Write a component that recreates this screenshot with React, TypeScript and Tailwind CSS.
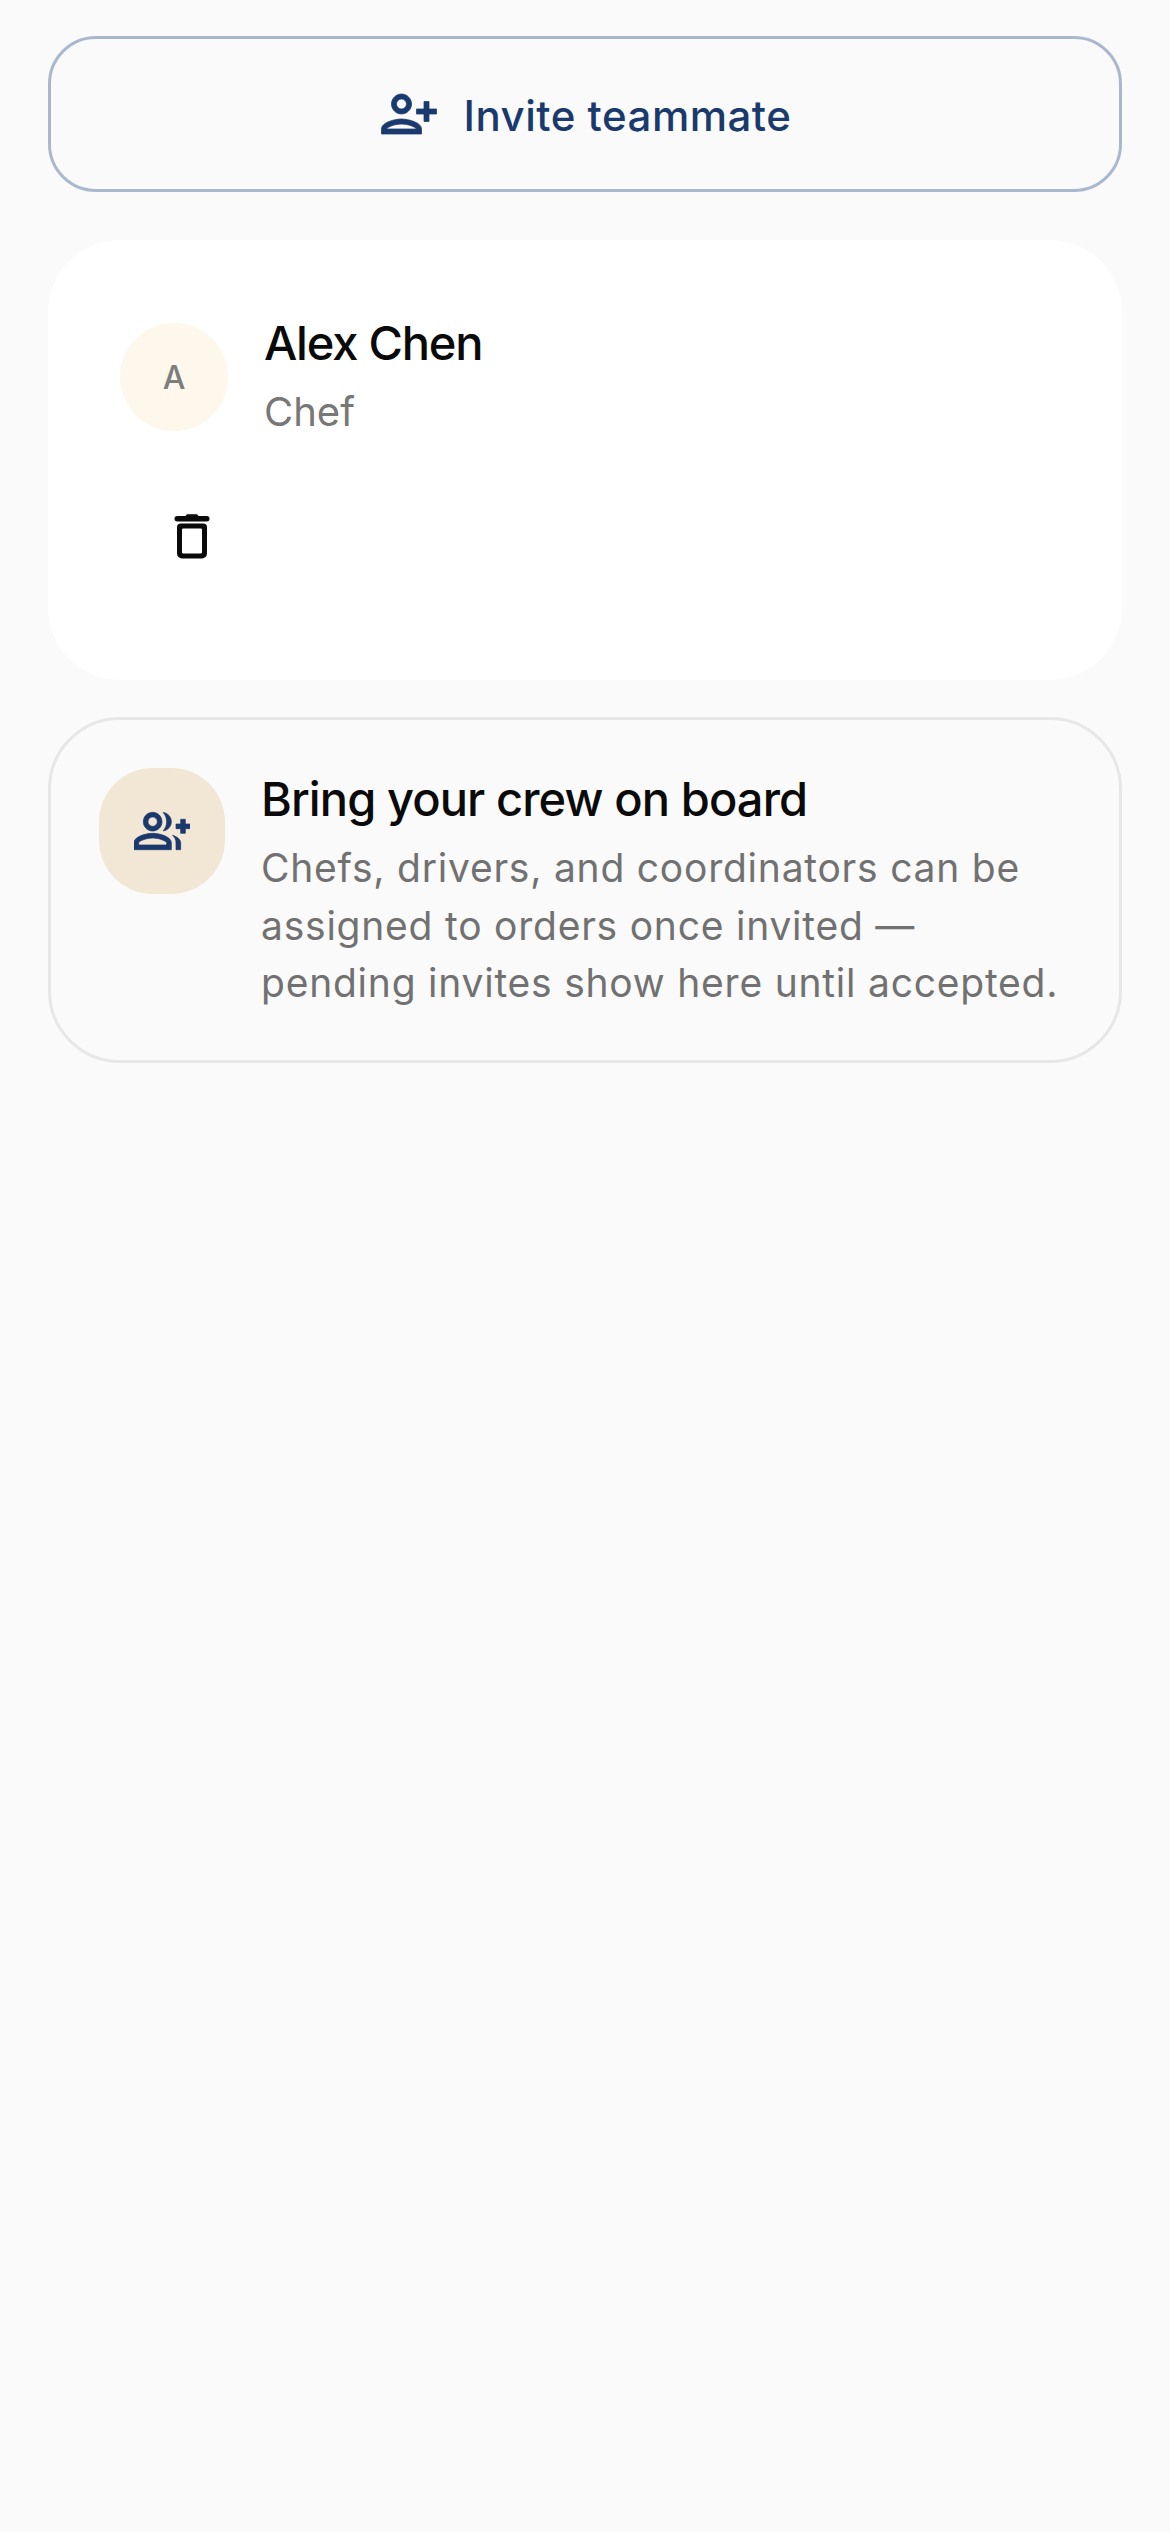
function PersonAddIcon() {
  return (
    <svg viewBox="0 0 24 24" className="h-[60px] w-[60px]" fill="currentColor" stroke="currentColor" strokeWidth={0.3}>
      <path d="M13 8c0-2.210-1.790-4-4-4S5 5.790 5 8s1.790 4 4 4 4-1.790 4-4zm-2 0c0 1.100-.9 2-2 2s-2-.9-2-2 .9-2 2-2 2 .9 2 2zM1 18v2h16v-2c0-2.660-5.330-4-8-4s-8 1.340-8 4zm2 0c.2-.71 3.300-2 6-2 2.690 0 5.780 1.280 6 2H3zM20 15v-3h3v-2h-3V7h-2v3h-3v2h3v3h2z" />
    </svg>
  );
}

function GroupAddIcon() {
  return (
    <svg viewBox="0 0 24 24" className="h-14 w-14" fill="currentColor" stroke="currentColor" strokeWidth={0.3}>
      <path d="M22 9V7h-2v2h-2v2h2v2h2v-2h2V9h-2z" />
      <path d="M8 12c2.210 0 4-1.790 4-4s-1.790-4-4-4-4 1.790-4 4 1.790 4 4 4zm0-6c1.100 0 2 .9 2 2s-.9 2-2 2-2-.9-2-2 .9-2 2-2z" />
      <path d="M8 13c-2.670 0-8 1.340-8 4v3h16v-3c0-2.660-5.330-4-8-4zm6 5H2v-.99C2.200 16.290 5.300 15 8 15s5.800 1.290 6 2v1z" />
      <path d="M12.510 4.050C13.430 5.110 14 6.490 14 8s-.57 2.890-1.490 3.950C14.470 11.700 16 10.040 16 8s-1.530-3.700-3.490-3.950z" />
      <path d="M16.530 13.830c.89.83 1.470 1.870 1.470 3.170v3h2v-3c0-1.450-1.590-2.510-3.470-3.170z" />
    </svg>
  );
}

function TrashIcon() {
  return (
    <svg viewBox="0 0 24 24" className="h-[60px] w-[60px] text-[#0a0a0a]" fill="currentColor">
      <rect x="5" y="4" width="14" height="2.2" rx="1.1" />
      <path d="M9 4.400 10 3.300h4l1 1.100z" />
      <path
        fillRule="evenodd"
        d="M7.500 7h9A1.500 1.500 0 0 1 18 8.500V19a2 2 0 0 1-2 2H8a2 2 0 0 1-2-2V8.500A1.500 1.500 0 0 1 7.500 7zM8.500 9a.5.5 0 0 0-.5.5V18.500a.5.5 0 0 0 .5.5h7a.5.5 0 0 0 .5-.5V9.500a.5.5 0 0 0-.5-.5z"
      />
    </svg>
  );
}

export default function App() {
  return (
    <div className="min-h-[2532px] bg-[#fafafa] px-12 pt-9 font-['Inter',sans-serif]">
      <button className="flex h-[156px] w-full items-center justify-center gap-[25px] rounded-[48px] border-[3px] border-[#a9b8cd] text-[#1a3a6e]">
        <PersonAddIcon />
        <span className="pt-[3px] text-[42px] font-medium leading-none tracking-[0.5px]">Invite teammate</span>
      </button>

      <div className="mt-12 h-[440px] rounded-[72px] bg-white pl-[72px] pt-[72px]">
        <div className="flex items-center gap-9">
          <div className="flex h-[108px] w-[108px] items-center justify-center rounded-full bg-[#fdf7ec] pt-[2px] text-[32px] font-medium text-[#7d7d7d]">
            A
          </div>
          <div className="pb-[3px]">
            <div className="text-[47px] font-medium leading-[62px] tracking-[-1.2px] text-[#0a0a0a]">Alex Chen</div>
            <div className="mt-[11px] text-[40px] leading-[54px] text-[#777777]">Chef</div>
          </div>
        </div>
        <div className="mt-16 pl-[42px]">
          <TrashIcon />
        </div>
      </div>

      <div className="mt-[37px] flex gap-9 rounded-[72px] border-[3px] border-[#e7e7e7] p-12">
        <div className="flex h-[126px] w-[126px] shrink-0 items-center justify-center rounded-[54px] bg-[#f2e6d4] text-[#1a3a6e]">
          <GroupAddIcon />
        </div>
        <div>
          <div className="text-[47px] font-medium leading-[62px] tracking-[-0.9px] text-[#0a0a0a]">
            Bring your crew on board
          </div>
          <p className="mt-[9px] text-[39px] leading-[57.500px] tracking-[0.77px] text-[#717171]">
            Chefs, drivers, and coordinators can be assigned to orders once invited — pending invites show here until
            accepted.
          </p>
        </div>
      </div>
    </div>
  );
}
